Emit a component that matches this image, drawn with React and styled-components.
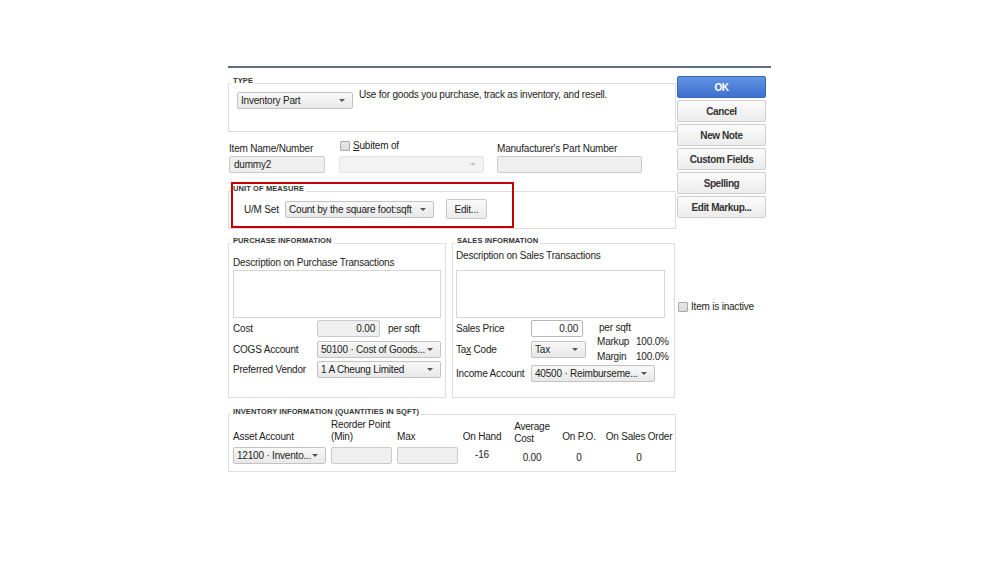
import React from 'react';
import styled, { createGlobalStyle } from 'styled-components';

const GlobalStyle = createGlobalStyle`
  html, body {
    margin: 0;
    background: #ffffff;
  }
  body {
    font-family: "Liberation Sans", Arial, sans-serif;
    font-size: 10px;
    letter-spacing: -0.2px;
    color: #222;
  }
  * { box-sizing: border-box; }
`;

const Page = styled.div`
  width: 999px;
  height: 562px;
  padding: 66px 0 0 228px;
  overflow: hidden;
`;

const Dialog = styled.div`
  width: 543px;
  border-top: 2px solid #5f6e82;
  padding-top: 8px;
  display: flex;
  align-items: flex-start;
`;

const Main = styled.div`
  width: 448px;
  display: flex;
  flex-direction: column;
`;

const Side = styled.div`
  width: 89px;
  margin-left: 1px;
  display: flex;
  flex-direction: column;
  gap: 2px;
`;

const Button = styled.div`
  height: 22px;
  display: flex;
  align-items: center;
  justify-content: center;
  font-weight: bold;
  font-size: 10px;
  letter-spacing: -0.4px;
  border-radius: 2px;
  border: 1px solid ${p => (p.$primary ? '#3a64b4' : '#cfcfcf')};
  background: ${p =>
    p.$primary
      ? 'linear-gradient(#5f93e3, #3f71cf)'
      : 'linear-gradient(#fbfbfb, #ececec)'};
  color: ${p => (p.$primary ? '#ffffff' : '#333')};
`;

const Group = styled.fieldset`
  margin: ${p => p.$mt || 0}px 0 0 0;
  padding: 0;
  border: 1px solid #dedede;
  min-width: 0;
  width: ${p => p.$w || 'auto'};
`;

const Legend = styled.legend`
  font-size: 7.5px;
  font-weight: bold;
  color: #333;
  line-height: 10px;
  padding: 0 2px 5px 2px;
  margin-left: 2px;
  letter-spacing: 0.1px;
`;

const TypeBody = styled.div`
  display: flex;
  align-items: flex-start;
  padding: 0 8px 22px 8px;
`;

const Desc = styled.div`
  line-height: 12px;
  margin: -2px 0 0 6px;
`;

const Select = styled.div`
  width: ${p => p.$w}px;
  height: 17px;
  margin-top: ${p => p.$mt || 0}px;
  display: flex;
  align-items: center;
  justify-content: space-between;
  padding: 0 7px 0 3px;
  border-radius: 2px;
  border: 1px solid ${p => (p.$disabled ? '#e4e4e4' : '#c3c3c3')};
  background: ${p =>
    p.$disabled ? '#f3f3f3' : 'linear-gradient(#f8f8f8, #e8e8e8)'};
  white-space: nowrap;
  overflow: hidden;
`;

const Arrow = styled.span`
  width: 0;
  height: 0;
  flex: none;
  border-left: 3px solid transparent;
  border-right: 3px solid transparent;
  border-top: 3px solid ${p => (p.$disabled ? '#c4c4c4' : '#555')};
`;

const Input = styled.div`
  width: ${p => p.$w}px;
  height: 17px;
  border-radius: 2px;
  border: 1px solid ${p => (p.$white ? '#b8b8b8' : '#cacaca')};
  background: ${p => (p.$white ? '#ffffff' : '#efefef')};
  padding: 0 4px;
  display: flex;
  align-items: center;
  justify-content: ${p => (p.$right ? 'flex-end' : 'flex-start')};
`;

const ItemRow = styled.div`
  display: flex;
  margin-top: 9px;
  padding-left: 1px;
  gap: 13px;
`;

const Field = styled.div`
  display: flex;
  flex-direction: column;
  margin-right: ${p => p.$mr || 0}px;
`;

const Label = styled.div`
  line-height: 13px;
  padding-top: 1px;
  margin-bottom: 1px;
  white-space: nowrap;
`;

const CheckLabel = styled.label`
  display: flex;
  align-items: center;
  gap: 3px;
  line-height: 13px;
  margin: -2px 0 4px 1px;
  white-space: nowrap;
`;

const Check = styled.span`
  width: 10px;
  height: 10px;
  flex: none;
  border: 1px solid #a9a9a9;
  border-radius: 1px;
  background: linear-gradient(#e9e9e9, #dadada);
`;

const Highlight = styled.div`
  position: relative;
  margin-top: 11px;
`;

const RedBox = styled.div`
  position: absolute;
  top: -2px;
  left: 3px;
  width: 283px;
  height: 46px;
  border: 2px solid #c40000;
  pointer-events: none;
`;

const UomBody = styled.div`
  display: flex;
  align-items: center;
  padding: 0 0 9px 15px;
`;

const UomLabel = styled.div`
  width: 41px;
`;

const EditButton = styled.div`
  width: 41px;
  height: 20px;
  margin-left: 12px;
  border: 1px solid #c8c8c8;
  border-radius: 2px;
  background: linear-gradient(#fafafa, #ebebeb);
  display: flex;
  align-items: center;
  justify-content: center;
`;

const InfoRow = styled.div`
  display: flex;
  gap: 6px;
  margin-top: 7px;
`;

const InfoBody = styled.div`
  padding: 0 ${p => p.$pl}px ${p => p.$pb}px ${p => p.$pl}px;
`;

const BlockLabel = styled.div`
  line-height: 13px;
  margin-top: ${p => p.$mt}px;
`;

const TextArea = styled.div`
  width: ${p => p.$w}px;
  height: 48px;
  margin-top: ${p => p.$mt}px;
  border: 1px solid #d6d6d6;
  background: #fff;
`;

const FormGrid = styled.div`
  display: grid;
  grid-template-columns: ${p => p.$cols};
  grid-template-rows: ${p => p.$rows};
  margin-top: 2px;
  align-items: start;
`;

const RowLabel = styled.div`
  height: 17px;
  line-height: 15px;
  padding-top: 1px;
  white-space: nowrap;
`;

const Cell = styled.div`
  display: flex;
  align-items: center;
  grid-column: ${p => p.$col || 'auto'};
`;

const Unit = styled.span`
  margin-left: ${p => p.$ml}px;
  white-space: nowrap;
`;

const PriceInfo = styled.div`
  grid-column: 3;
  grid-row: 1 / span 2;
  padding: 1px 0 0 11px;
  display: flex;
  flex-direction: column;
`;

const InfoLine = styled.div`
  display: flex;
  line-height: ${p => p.$lh}px;
  padding-left: ${p => p.$pl || 0}px;
  white-space: nowrap;
`;

const InfoKey = styled.span`
  width: 39px;
`;

const InactiveRow = styled.label`
  display: flex;
  align-items: center;
  gap: 3px;
  margin: 80px 0 0 1px;
  line-height: 13px;
  white-space: nowrap;
`;

const InvGrid = styled.div`
  display: grid;
  grid-template-columns: 93px 61px 61px 38px 52px 32px 78px;
  column-gap: 5px;
  row-gap: 1px;
  margin-top: -3px;
  padding: 0 0 7px 4px;
  align-items: end;
`;

const Head = styled.div`
  line-height: 12px;
  justify-self: ${p => (p.$center ? 'center' : 'start')};
  margin-bottom: ${p => (p.$down ? -2 : 0)}px;
  white-space: nowrap;
`;

const Value = styled.div`
  align-self: start;
  justify-self: center;
  line-height: 13px;
  padding-top: ${p => p.$pt}px;
`;

const Dropdown = ({ w, mt, disabled, children }) => (
  <Select $w={w} $mt={mt} $disabled={disabled}>
    <span>{children}</span>
    <Arrow $disabled={disabled} />
  </Select>
);

export default function App() {
  return (
    <Page>
      <GlobalStyle />
      <Dialog>
        <Main>
          <Group>
            <Legend>TYPE</Legend>
            <TypeBody>
              <Dropdown w={116} mt={1}>Inventory Part</Dropdown>
              <Desc>Use for goods you purchase, track as inventory, and resell.</Desc>
            </TypeBody>
          </Group>

          <ItemRow>
            <Field $mr={1}>
              <Label>Item Name/Number</Label>
              <Input $w={96}>dummy2</Input>
            </Field>
            <Field>
              <CheckLabel>
                <Check />
                <span><u>S</u>ubitem of</span>
              </CheckLabel>
              <Dropdown w={145} disabled> </Dropdown>
            </Field>
            <Field>
              <Label>Manufacturer's Part Number</Label>
              <Input $w={145} />
            </Field>
          </ItemRow>

          <Highlight>
            <Group>
              <Legend>UNIT OF MEASURE</Legend>
              <UomBody>
                <UomLabel>U/M Set</UomLabel>
                <Dropdown w={149}>Count by the square foot:sqft</Dropdown>
                <EditButton>Edit...</EditButton>
              </UomBody>
            </Group>
            <RedBox />
          </Highlight>

          <InfoRow>
            <Group $w="218px">
              <Legend>PURCHASE INFORMATION</Legend>
              <InfoBody $pl={4} $pb={18}>
                <BlockLabel $mt={5}>Description on Purchase Transactions</BlockLabel>
                <TextArea $w={208} $mt={1} />
                <FormGrid $cols="84px auto" $rows="21px 20px 17px">
                  <RowLabel>Cost</RowLabel>
                  <Cell>
                    <Input $w={63} $right>0.00</Input>
                    <Unit $ml={8}>per sqft</Unit>
                  </Cell>
                  <RowLabel>COGS Account</RowLabel>
                  <Cell><Dropdown w={124}>50100 · Cost of Goods...</Dropdown></Cell>
                  <RowLabel>Preferred Vendor</RowLabel>
                  <Cell><Dropdown w={124}>1 A Cheung Limited</Dropdown></Cell>
                </FormGrid>
              </InfoBody>
            </Group>

            <Group $w="223px">
              <Legend>SALES INFORMATION</Legend>
              <InfoBody $pl={3} $pb={15}>
                <BlockLabel $mt={-2}>Description on Sales Transactions</BlockLabel>
                <TextArea $w={209} $mt={8} />
                <FormGrid $cols="75px 55px auto" $rows="21px 24px 17px">
                  <RowLabel>Sales Price</RowLabel>
                  <Cell><Input $w={52} $white $right>0.00</Input></Cell>
                  <PriceInfo>
                    <InfoLine $lh={13} $pl={2}>per sqft</InfoLine>
                    <InfoLine $lh={15}><InfoKey>Markup</InfoKey>100.0%</InfoLine>
                    <InfoLine $lh={15}><InfoKey>Margin</InfoKey>100.0%</InfoLine>
                  </PriceInfo>
                  <RowLabel>Ta<u>x</u> Code</RowLabel>
                  <Cell><Dropdown w={55}>Tax</Dropdown></Cell>
                  <RowLabel>Income Account</RowLabel>
                  <Cell $col="2 / span 2"><Dropdown w={124}>40500 · Reimburseme...</Dropdown></Cell>
                </FormGrid>
              </InfoBody>
            </Group>
          </InfoRow>

          <Group $mt={9}>
            <Legend>INVENTORY INFORMATION (QUANTITIES IN SQFT)</Legend>
            <InvGrid>
              <Head>Asset Account</Head>
              <Head>Reorder Point<br />(Min)</Head>
              <Head>Max</Head>
              <Head $center>On Hand</Head>
              <Head $center $down>Average<br />Cost</Head>
              <Head $center>On P.O.</Head>
              <Head $center>On Sales Order</Head>

              <Dropdown w={93}>12100 · Invento...</Dropdown>
              <Input $w={61} />
              <Input $w={61} />
              <Value $pt={4}>-16</Value>
              <Value $pt={7}>0.00</Value>
              <Value $pt={7}>0</Value>
              <Value $pt={7}>0</Value>
            </InvGrid>
          </Group>
        </Main>

        <Side>
          <Button $primary>OK</Button>
          <Button>Cancel</Button>
          <Button>New Note</Button>
          <Button>Custom Fields</Button>
          <Button>Spelling</Button>
          <Button>Edit Markup...</Button>
          <InactiveRow>
            <Check />
            <span>Item is inactive</span>
          </InactiveRow>
        </Side>
      </Dialog>
    </Page>
  );
}
